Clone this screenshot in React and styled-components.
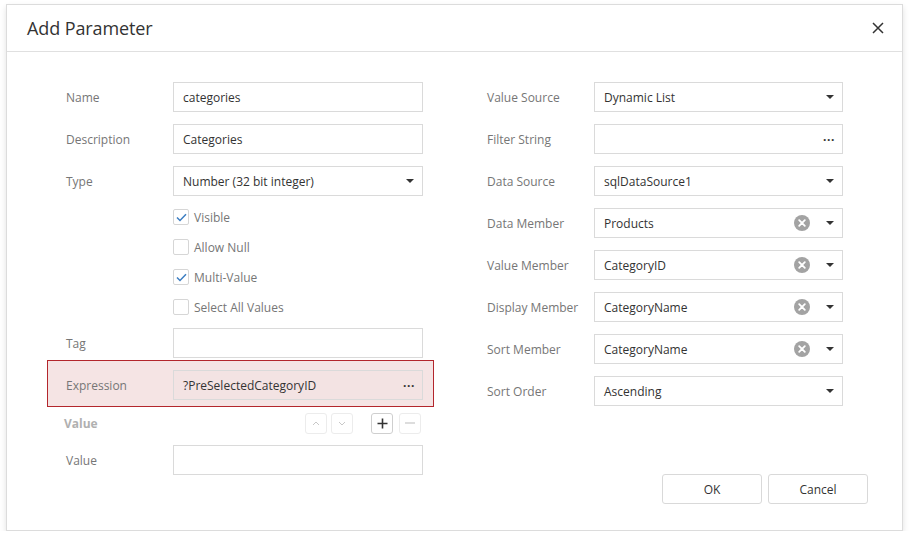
import React from 'react';
import styled, { createGlobalStyle, css } from 'styled-components';

const GlobalStyle = createGlobalStyle`
  html, body {
    margin: 0;
    padding: 0;
    background: #ffffff;
  }
  body {
    font-family: "Open Sans", "Noto Sans", sans-serif;
    color: #333;
  }
  * {
    box-sizing: border-box;
  }
`;

// Dialog frame
const Dialog = styled.div`
  margin: 4px 0 0 6px;
  width: 897px;
  height: 527px;
  border: 1px solid #dcdcdc;
  background: #fff;
  box-shadow: 0 3px 6px rgba(0, 0, 0, 0.12);
  display: flex;
  flex-direction: column;
`;

const Header = styled.header`
  height: 47px;
  flex: 0 0 47px;
  border-bottom: 1px solid #e0e0e0;
  display: flex;
  align-items: center;
  justify-content: space-between;
  padding: 0 16px 0 20px;
`;

const Title = styled.h1`
  margin: 0;
  font-size: 18px;
  font-weight: 400;
  color: #333;
  letter-spacing: -0.1px;
`;

const CloseButton = styled.button`
  border: 0;
  background: none;
  padding: 0;
  width: 16px;
  height: 16px;
  display: flex;
  align-items: center;
  justify-content: center;
  cursor: pointer;
`;

const Body = styled.div`
  flex: 1;
  display: grid;
  grid-template-columns: 387px 387px;
  column-gap: 34px;
  padding: 24px 0 26px 40px;
`;

const Column = styled.div`
  display: flex;
  flex-direction: column;
`;

const Row = styled.div`
  display: flex;
  align-items: center;
  padding: 6px 11px 6px 19px;

  ${(p) =>
    p.$highlight &&
    css`
      margin-top: -4px;
      padding: 9px 10px 6px 18px;
      background: #f5e4e4;
      border: 1px solid #b3262c;
    `}
`;

const Label = styled.label`
  width: 107px;
  flex: 0 0 107px;
  font-size: 12px;
  color: #767676;
`;

const Field = styled.div`
  position: relative;
  width: ${(p) => p.$width || 250}px;
  height: 30px;
  border: 1px solid #dadada;
  background: ${(p) => (p.$tinted ? '#f3e3e3' : '#fff')};
  display: flex;
  align-items: center;
  padding: 0 7px 0 9px;
  font-size: 12px;
  color: #333;
`;

const FieldText = styled.span`
  flex: 1;
  white-space: nowrap;
`;

const ArrowButton = styled.span`
  width: 10px;
  display: flex;
  justify-content: center;
  margin-left: 15px;
`;

const ClearIcon = styled.span`
  width: 16px;
  height: 16px;
  border-radius: 50%;
  background: #a3a3a3;
  display: flex;
  align-items: center;
  justify-content: center;
`;

const Ellipsis = styled.span`
  width: 12px;
  text-align: center;
  font-size: 12px;
  letter-spacing: 0.5px;
  color: #333;
  font-weight: 700;
  line-height: 1;
  margin-top: -5px;
`;

const CheckRow = styled.label`
  display: flex;
  align-items: center;
  height: 30px;
  padding-left: 126px;
  font-size: 12px;
  color: #767676;
`;

const CheckBox = styled.span`
  width: 16px;
  height: 16px;
  border: 1px solid #d6d6d6;
  border-radius: 2px;
  background: #fff;
  margin-right: 5px;
  display: flex;
  align-items: center;
  justify-content: center;
`;

const ValueHeader = styled.div`
  height: 32px;
  display: flex;
  align-items: center;
  padding: 0 13px 0 17px;
`;

const SectionTitle = styled.span`
  flex: 1;
  font-size: 12px;
  font-weight: 700;
  color: #b0b0b0;
`;

const ToolButton = styled.button`
  width: 22px;
  height: 21px;
  padding: 0;
  margin-left: ${(p) => p.$gap || 4}px;
  border: 1px solid ${(p) => (p.$active ? '#cfcfcf' : '#ececec')};
  border-radius: 3px;
  background: #fff;
  display: flex;
  align-items: center;
  justify-content: center;
`;

const Footer = styled.div`
  margin-top: auto;
  margin-right: -13px;
  display: flex;
  justify-content: flex-end;
  gap: 6px;
`;

const Button = styled.button`
  width: 100px;
  height: 30px;
  border: 1px solid #d9d9d9;
  border-radius: 3px;
  background: #fff;
  font-family: inherit;
  font-size: 12px;
  color: #333;
`;

const Caret = () => (
  <svg width="8" height="4" viewBox="0 0 8 4">
    <path d="M0 0h8L4 4z" fill="#333" />
  </svg>
);

const Clear = () => (
  <ClearIcon>
    <svg width="8" height="8" viewBox="0 0 8 8">
      <path d="M1.2 1.2l5.6 5.6M6.8 1.2L1.2 6.8" stroke="#fff" strokeWidth="1.8" strokeLinecap="round" />
    </svg>
  </ClearIcon>
);

const Check = () => (
  <svg width="11" height="9" viewBox="0 0 11 9">
    <path d="M1 4.5l3 3L10 1.2" fill="none" stroke="#3d7ec2" strokeWidth="1.5" />
  </svg>
);

const TextRow = ({ label, value, width, kind, highlight }) => (
  <Row $highlight={highlight}>
    <Label>{label}</Label>
    <Field $width={width} $tinted={highlight}>
      <FieldText>{value}</FieldText>
      {kind === 'ellipsis' && <Ellipsis>...</Ellipsis>}
      {kind === 'clear' && <Clear />}
      {(kind === 'select' || kind === 'clear') && (
        <ArrowButton>
          <Caret />
        </ArrowButton>
      )}
    </Field>
  </Row>
);

const Checkbox = ({ label, checked }) => (
  <CheckRow>
    <CheckBox>{checked && <Check />}</CheckBox>
    {label}
  </CheckRow>
);

const Chevron = ({ up }) => (
  <svg width="8" height="5" viewBox="0 0 8 5">
    <path d={up ? 'M1 4l3-3 3 3' : 'M1 1l3 3 3-3'} fill="none" stroke="#c8c8c8" strokeWidth="1" />
  </svg>
);

const rightFields = [
  { label: 'Value Source', value: 'Dynamic List', kind: 'select' },
  { label: 'Filter String', value: '', kind: 'ellipsis' },
  { label: 'Data Source', value: 'sqlDataSource1', kind: 'select' },
  { label: 'Data Member', value: 'Products', kind: 'clear' },
  { label: 'Value Member', value: 'CategoryID', kind: 'clear' },
  { label: 'Display Member', value: 'CategoryName', kind: 'clear' },
  { label: 'Sort Member', value: 'CategoryName', kind: 'clear' },
  { label: 'Sort Order', value: 'Ascending', kind: 'select' },
];

export default function App() {
  return (
    <>
      <GlobalStyle />
      <Dialog>
        <Header>
          <Title>Add Parameter</Title>
          <CloseButton aria-label="Close">
            <svg width="12" height="12" viewBox="0 0 12 12">
              <path d="M1 1l10 10M11 1L1 11" stroke="#333" strokeWidth="1.5" />
            </svg>
          </CloseButton>
        </Header>
        <Body>
          <Column>
            <TextRow label="Name" value="categories" />
            <TextRow label="Description" value="Categories" />
            <TextRow label="Type" value="Number (32 bit integer)" kind="select" />
            <Checkbox label="Visible" checked />
            <Checkbox label="Allow Null" />
            <Checkbox label="Multi-Value" checked />
            <Checkbox label="Select All Values" />
            <TextRow label="Tag" value="" />
            <TextRow label="Expression" value="?PreSelectedCategoryID" kind="ellipsis" highlight />
            <ValueHeader>
              <SectionTitle>Value</SectionTitle>
              <ToolButton aria-label="Move up">
                <Chevron up />
              </ToolButton>
              <ToolButton aria-label="Move down">
                <Chevron />
              </ToolButton>
              <ToolButton $active $gap={18} aria-label="Add">
                <svg width="11" height="11" viewBox="0 0 11 11">
                  <path d="M5.5 0.5v10M0.5 5.5h10" stroke="#333" strokeWidth="1.6" />
                </svg>
              </ToolButton>
              <ToolButton $gap={6} aria-label="Remove">
                <svg width="10" height="2" viewBox="0 0 10 2">
                  <path d="M0 1h10" stroke="#cfcfcf" strokeWidth="1.4" />
                </svg>
              </ToolButton>
            </ValueHeader>
            <TextRow label="Value" value="" />
          </Column>
          <Column>
            {rightFields.map((f) => (
              <TextRow key={f.label} {...f} width={249} />
            ))}
            <Footer>
              <Button>OK</Button>
              <Button>Cancel</Button>
            </Footer>
          </Column>
        </Body>
      </Dialog>
    </>
  );
}
